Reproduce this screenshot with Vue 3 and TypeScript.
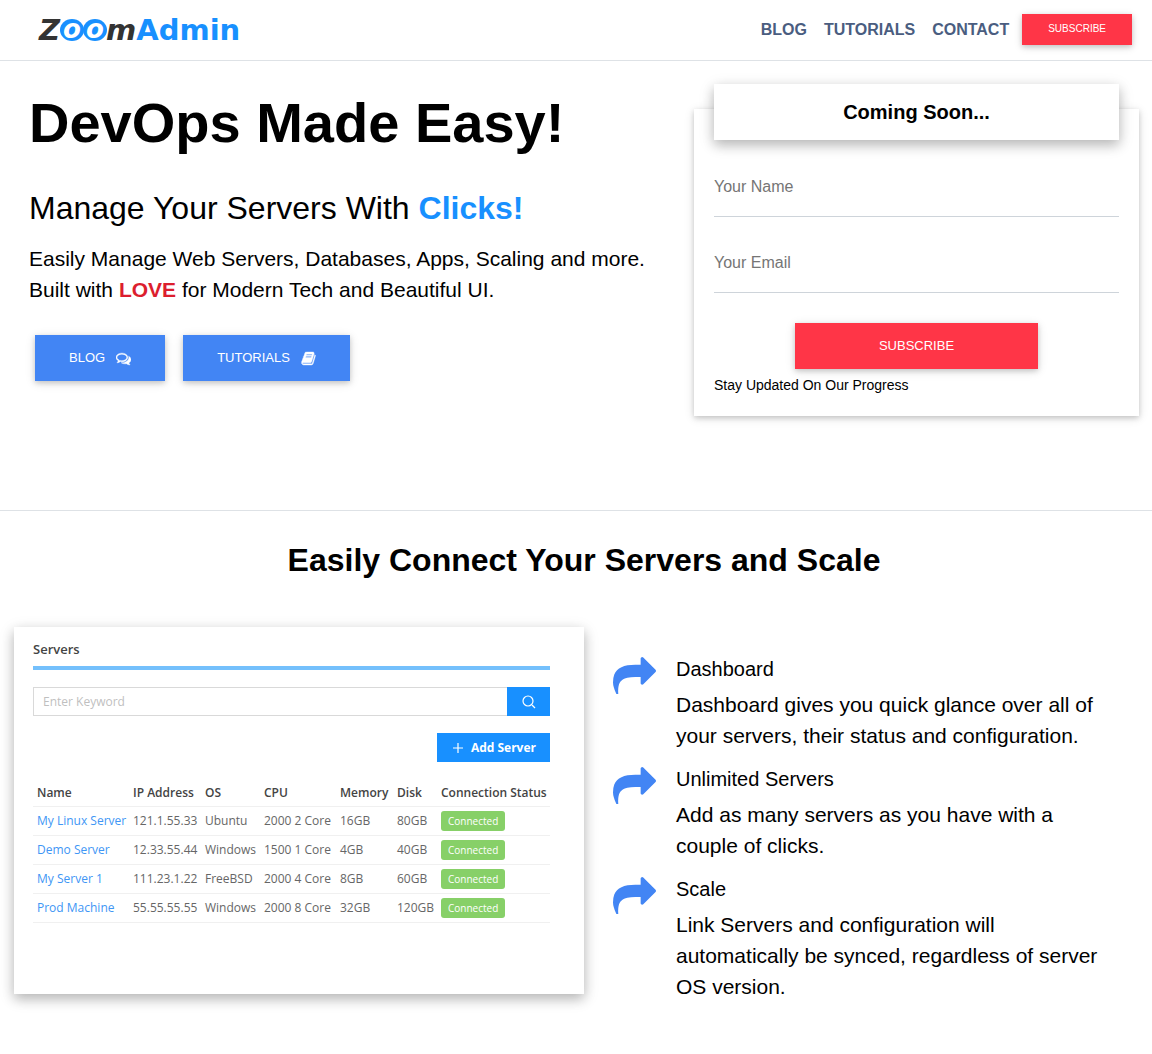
<script setup lang="ts">
import { ref } from 'vue'

interface Server {
  name: string
  ip: string
  os: string
  cpu: string
  memory: string
  disk: string
}

interface Feature {
  title: string
  text: string
}

const name = ref('')
const email = ref('')
const keyword = ref('')

const links = ['Blog', 'Tutorials', 'Contact']

const columns = [
  { label: 'Name', weight: 96 },
  { label: 'IP Address', weight: 72 },
  { label: 'OS', weight: 59 },
  { label: 'CPU', weight: 76 },
  { label: 'Memory', weight: 57 },
  { label: 'Disk', weight: 44 },
  { label: 'Connection Status', weight: 113 },
]

const totalWeight = columns.reduce((sum, column) => sum + column.weight, 0)

const servers: Server[] = [
  { name: 'My Linux Server', ip: '121.1.55.33', os: 'Ubuntu', cpu: '2000 2 Core', memory: '16GB', disk: '80GB' },
  { name: 'Demo Server', ip: '12.33.55.44', os: 'Windows', cpu: '1500 1 Core', memory: '4GB', disk: '40GB' },
  { name: 'My Server 1', ip: '111.23.1.22', os: 'FreeBSD', cpu: '2000 4 Core', memory: '8GB', disk: '60GB' },
  { name: 'Prod Machine', ip: '55.55.55.55', os: 'Windows', cpu: '2000 8 Core', memory: '32GB', disk: '120GB' },
]

const features: Feature[] = [
  {
    title: 'Dashboard',
    text: 'Dashboard gives you quick glance over all of your servers, their status and configuration.',
  },
  {
    title: 'Unlimited Servers',
    text: 'Add as many servers as you have with a couple of clicks.',
  },
  {
    title: 'Scale',
    text: 'Link Servers and configuration will automatically be synced, regardless of server OS version.',
  },
]
</script>

<template>
  <div class="page">
    <header class="topbar">
      <a href="#" class="logo" aria-label="ZoomAdmin">
        <span class="slant">Z</span><span class="lens">o</span><span class="lens">o</span><span class="slant">m</span><span class="admin">Admin</span>
      </a>
      <nav class="nav">
        <a v-for="link in links" :key="link" href="#">{{ link }}</a>
        <button type="button" class="btn red small">Subscribe</button>
      </nav>
    </header>

    <section class="hero">
      <div class="intro">
        <h1>DevOps Made Easy!</h1>
        <h2>Manage Your Servers With <strong class="clicks">Clicks!</strong></h2>
        <p>
          Easily Manage Web Servers, Databases, Apps, Scaling and more.<br />
          Built with <strong class="love">LOVE</strong> for Modern Tech and Beautiful UI.
        </p>
        <div class="actions">
          <a href="#" class="btn blue">
            Blog
            <svg viewBox="0 0 1792 1792" aria-hidden="true"><path d="M704 384q-153 0-286 52t-211.5 141-78.5 191q0 82 53 158t149 132l97 56-35 84q34-20 62-39l44-31 53 10q78 14 153 14 153 0 286-52t211.5-141 78.5-191-78.5-191-211.5-141-286-52zm0-128q191 0 353.5 68.5t256.5 186.5 94 257-94 257-256.5 186.5-353.5 68.5q-86 0-176-16-124 88-278 128-36 9-86 16h-3q-11 0-20.5-8t-11.5-21q-1-3-1-6.5t.5-6.5 2-6l2.5-5 3.5-5.5 4-5 4.5-5 4-4.5q5-6 23-25t26-29.5 22.5-29 25-38.5 20.5-44q-124-72-195-177t-71-224q0-139 94-257t256.5-186.5 353.5-68.5zm822 1169q10 24 20.5 44t25 38.5 22.5 29 26 29.5 23 25q1 1 4 4.5t4.5 5 4 5 3.5 5.5l2.5 5 2 6 .5 6.5-1 6.5q-3 14-13 22t-22 7q-50-7-86-16-154-40-278-128-90 16-176 16-271 0-472-132 58 4 88 4 161 0 309-45t264-129q125-92 192-212t67-254q0-77-23-152 129 71 204 178t75 230q0 120-71 224.5t-195 176.5z" /></svg>
          </a>
          <a href="#" class="btn blue">
            Tutorials
            <svg viewBox="0 0 1792 1792" aria-hidden="true"><path d="M1703 478q40 57 18 129l-275 906q-19 64-76.5 107.5t-122.5 43.5h-923q-77 0-148.5-53.5t-99.5-131.5q-24-67-2-127 0-4 3-27t4-37q1-8-3-21.5t-3-19.5q2-11 8-21t16.5-23.5 16.5-23.5q23-38 45-91.5t30-91.5q3-10 .5-30t-.5-28q3-11 17-28t17-23q21-36 42-92t25-90q1-9-2.5-32t.5-28q4-13 22-30.5t22-22.5q19-26 42.5-84.5t27.5-96.5q1-8-3-25.5t-2-26.5q2-8 9-18t18-23 17-21q8-12 16.5-30.5t15-35 16-36 19.5-32 26.5-23.5 36-11.5 47.5 5.5l-1 3q38-9 51-9h761q74 0 114 56t18 130l-274 906q-36 119-71.5 153.5t-128.5 34.5h-869q-27 0-38 15-11 16-1 43 24 70 144 70h923q29 0 56-15.5t35-41.5l300-987q7-22 5-57 38 15 59 43zm-1064 2q-4 13 2 22.5t20 9.5h608q13 0 25.5-9.5t16.5-22.5l21-64q4-13-2-22.5t-20-9.5h-608q-13 0-25.5 9.5t-16.5 22.5zm-83 256q-4 13 2 22.5t20 9.5h608q13 0 25.5-9.5t16.5-22.5l21-64q4-13-2-22.5t-20-9.5h-608q-13 0-25.5 9.5t-16.5 22.5z" /></svg>
          </a>
        </div>
      </div>

      <form class="signup" @submit.prevent>
        <h3>Coming Soon...</h3>
        <input v-model="name" type="text" placeholder="Your Name" aria-label="Your Name" />
        <input v-model="email" type="email" placeholder="Your Email" aria-label="Your Email" />
        <button type="submit" class="btn red wide">Subscribe</button>
        <p>Stay Updated On Our Progress</p>
      </form>
    </section>

    <section class="connect">
      <h2>Easily Connect Your Servers and Scale</h2>
      <div class="columns">
        <div class="panel">
          <h4>Servers</h4>
          <form class="search" @submit.prevent>
            <input v-model="keyword" type="text" placeholder="Enter Keyword" aria-label="Enter Keyword" />
            <button type="submit" aria-label="Search">
              <svg viewBox="0 0 14 14" aria-hidden="true"><circle cx="6" cy="6" r="5" /><path d="M10 10l3 3" /></svg>
            </button>
          </form>
          <button type="button" class="add">
            <svg viewBox="0 0 10 10" aria-hidden="true"><path d="M5 0v10M0 5h10" /></svg>
            Add Server
          </button>
          <table>
            <colgroup>
              <col v-for="column in columns" :key="column.label" :style="{ width: (column.weight / totalWeight) * 100 + '%' }" />
            </colgroup>
            <thead>
              <tr>
                <th v-for="column in columns" :key="column.label" scope="col">{{ column.label }}</th>
              </tr>
            </thead>
            <tbody>
              <tr v-for="server in servers" :key="server.name">
                <td><a href="#">{{ server.name }}</a></td>
                <td>{{ server.ip }}</td>
                <td>{{ server.os }}</td>
                <td>{{ server.cpu }}</td>
                <td>{{ server.memory }}</td>
                <td>{{ server.disk }}</td>
                <td><span class="tag">Connected</span></td>
              </tr>
            </tbody>
          </table>
        </div>

        <ul class="features">
          <li v-for="feature in features" :key="feature.title">
            <svg viewBox="0 64 1792 1536" aria-hidden="true"><path d="M1792 640q0 26-19 45l-512 512q-19 19-45 19t-45-19-19-45v-256h-224q-98 0-175.5 6t-154 21.5-133 42.5-105.5 69.5-80 101-48.5 138.5-17.5 181q0 55 5 123 0 6 2.5 23.5t2.5 26.5q0 15-8.5 25t-23.5 10q-16 0-28-17-7-9-13-22t-13.5-30-10.5-24q-127-285-127-451 0-199 53-333 162-403 875-403h224v-256q0-26 19-45t45-19 45 19l512 512q19 19 19 45z" /></svg>
            <div>
              <h5>{{ feature.title }}</h5>
              <p>{{ feature.text }}</p>
            </div>
          </li>
        </ul>
      </div>
    </section>
  </div>
</template>

<style>
body {
  margin: 0;
  background: #fff;
}
</style>

<style scoped>
.page {
  font-family: 'Liberation Sans', Arial, sans-serif;
  font-size: 16px;
  color: #000;
}

.page * {
  box-sizing: border-box;
}

h1, h2, h3, h4, h5, p, ul {
  margin: 0;
  padding: 0;
}

a {
  text-decoration: none;
}

button, input {
  font-family: inherit;
  border: 0;
  border-radius: 0;
}

button {
  cursor: pointer;
}

.topbar {
  display: flex;
  align-items: center;
  justify-content: space-between;
  height: 61px;
  padding: 0 20px 2px 39px;
  border-bottom: 1px solid #dee2e6;
}

.logo {
  display: flex;
  align-items: center;
  padding-top: 2px;
  font: 700 29px/36px 'DejaVu Sans', sans-serif;
  color: #1890ff;
}

.slant {
  color: #333;
  font-style: italic;
}

.lens {
  display: flex;
  align-items: center;
  justify-content: center;
  width: 24px;
  height: 22px;
  margin-right: -1px;
  padding-bottom: 2px;
  border-radius: 50%;
  background: #1890ff;
  font-size: 26px;
  font-style: italic;
  line-height: 20px;
  color: #fff;
}

.nav {
  display: flex;
  align-items: center;
  gap: 17px;
}

.nav a {
  padding-top: 2px;
  font-weight: 700;
  text-transform: uppercase;
  color: #4a5d80;
}

.btn {
  display: inline-flex;
  align-items: center;
  justify-content: center;
  height: 46px;
  padding: 0 34px;
  font-size: 13px;
  line-height: 20px;
  text-transform: uppercase;
  color: #fff;
  box-shadow: 0 2px 5px rgba(0, 0, 0, 0.16), 0 2px 10px rgba(0, 0, 0, 0.12);
}

.red {
  background: #ff3547;
}

.blue {
  background: #4285f4;
}

.small {
  height: 31px;
  margin-left: -4px;
  padding: 0 26px;
  font-size: 10px;
}

.btn svg {
  width: 15px;
  height: 15px;
  margin-left: 11px;
  fill: currentColor;
  stroke: currentColor;
  stroke-width: 50;
}

.hero {
  display: flex;
  align-items: flex-start;
  justify-content: space-between;
  gap: 40px;
  min-height: 450px;
  padding: 28px 13px 0 29px;
  border-bottom: 1px solid #dee2e6;
}

h1 {
  font-size: 56px;
  line-height: 67px;
}

.intro h2 {
  margin-top: 33px;
  font-size: 32px;
  font-weight: 400;
  line-height: 38px;
}

.intro p {
  margin-top: 16px;
  font-size: 21px;
  line-height: 31px;
}

.clicks {
  color: #1890ff;
}

.love {
  color: #dc1e2e;
}

.actions {
  display: flex;
  gap: 18px;
  margin: 30px 6px 0;
}

.signup {
  display: flex;
  flex-direction: column;
  flex: 0 1 445px;
  margin-top: 20px;
  padding: 0 20px 20px;
  box-shadow: 0 2px 5px rgba(0, 0, 0, 0.16), 0 2px 10px rgba(0, 0, 0, 0.12);
}

.signup h3 {
  margin-top: -25px;
  padding: 16px;
  background: #fff;
  font-size: 20px;
  line-height: 24px;
  text-align: center;
  box-shadow: 0 5px 11px rgba(0, 0, 0, 0.18), 0 4px 15px rgba(0, 0, 0, 0.15);
}

.signup input {
  height: 60px;
  margin-top: 16px;
  padding: 0;
  border-bottom: 1px solid #ced4da;
  background: none;
  font-size: 16px;
  outline: none;
}

.signup h3 + input {
  margin-top: 17px;
}

.signup input::placeholder {
  color: #757575;
}

.wide {
  align-self: center;
  width: 60%;
  margin-top: 30px;
}

.signup p {
  margin-top: 6px;
  font-size: 14px;
  line-height: 21px;
}

.connect {
  padding: 30px 0 40px;
}

.connect h2 {
  padding-left: 16px;
  font-size: 32px;
  line-height: 38px;
  text-align: center;
}

.columns {
  display: grid;
  grid-template-columns: minmax(0, 570fr) minmax(0, 539fr);
  align-items: start;
  gap: 29px;
  margin-top: 48px;
  padding-left: 14px;
}

.panel {
  display: flex;
  flex-direction: column;
  padding: 12px 34px 71px 19px;
  font-family: 'Open Sans', 'Noto Sans', sans-serif;
  font-size: 12px;
  line-height: 20px;
  color: #666;
  box-shadow: 0 5px 11px rgba(0, 0, 0, 0.18), 0 4px 15px rgba(0, 0, 0, 0.15);
}

.panel h4 {
  padding-bottom: 7px;
  border-bottom: 4px solid #74c0fc;
  font-size: 13px;
  font-weight: 600;
  color: #444;
}

.search {
  display: flex;
  height: 29px;
  margin-top: 17px;
}

.search input {
  flex: 1;
  min-width: 0;
  padding: 0 9px;
  border: 1px solid #d9d9d9;
  border-right: 0;
  font-size: 12px;
}

.search input::placeholder {
  color: #bfbfbf;
}

.search button {
  display: flex;
  align-items: center;
  justify-content: center;
  width: 43px;
  padding: 0;
  background: #1890ff;
}

.search svg {
  width: 14px;
  height: 14px;
}

.panel svg {
  fill: none;
  stroke: #fff;
  stroke-width: 1.2;
}

.add {
  display: flex;
  align-items: center;
  align-self: flex-end;
  gap: 8px;
  height: 29px;
  margin-top: 17px;
  padding: 0 14px 0 16px;
  background: #1890ff;
  font-size: 12px;
  font-weight: 700;
  color: #fff;
}

.add svg {
  width: 10px;
  height: 10px;
}

table {
  width: 100%;
  margin-top: 18px;
  border-collapse: collapse;
  table-layout: fixed;
  white-space: nowrap;
}

th, td {
  height: 29px;
  padding: 0 0 0 4px;
  border-bottom: 1px solid #f0f0f0;
  text-align: left;
}

th {
  height: 26px;
  font-weight: 600;
  color: #444;
}

td a {
  color: #4096f5;
}

.tag {
  display: inline-block;
  padding: 0 7px;
  border-radius: 3px;
  background: #87d068;
  font-size: 10px;
  color: #fff;
}

.features {
  display: flex;
  flex-direction: column;
  gap: 16px;
  padding: 30px 44px 0 0;
  list-style: none;
}

.features li {
  display: flex;
  gap: 20px;
}

.features svg {
  flex: none;
  width: 43px;
  height: 37px;
  fill: #4285f4;
}

.features h5 {
  font-size: 20px;
  font-weight: 400;
  line-height: 24px;
}

.features p {
  margin-top: 8px;
  font-size: 21px;
  line-height: 31px;
}
</style>
